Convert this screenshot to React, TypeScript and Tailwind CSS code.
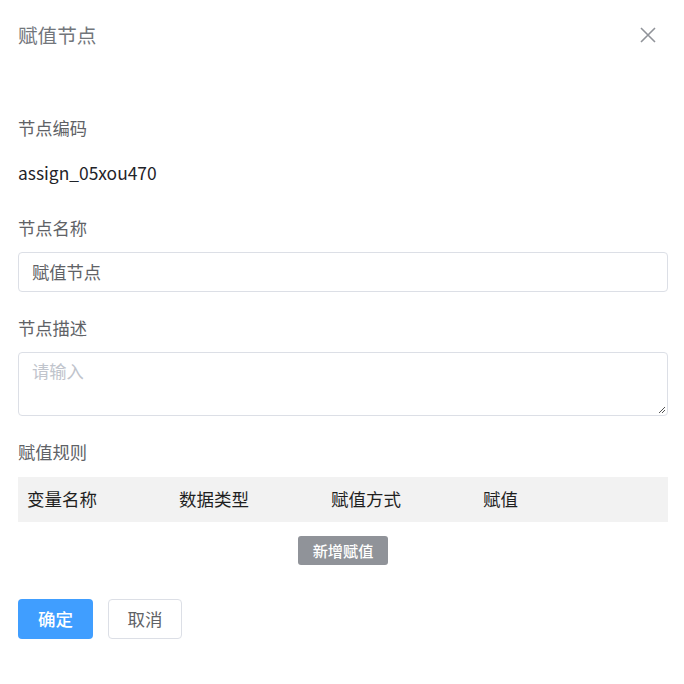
import React from "react";

const font = { fontFamily: '"Noto Sans CJK SC", "Noto Sans", sans-serif' };

function Label({ children }: { children: React.ReactNode }) {
  return <div className="text-[17.3px] leading-[24px] text-[#606266]">{children}</div>;
}

export default function App() {
  const cols = ["变量名称", "数据类型", "赋值方式", "赋值"];
  return (
    <div className="h-[684px] w-[684px] bg-white" style={font}>
      <div className="flex items-center justify-between pl-[18px] pr-[27px] pt-[20px]">
        <h1 className="text-[19.6px] leading-[30px] text-[#72767b]">赋值节点</h1>
        <svg width="18" height="18" viewBox="0 0 18 18" className="text-[#909399]">
          <path d="M2 2 L16 16 M16 2 L2 16" stroke="currentColor" strokeWidth="1.6" fill="none" />
        </svg>
      </div>

      <div className="pl-[18px] pr-[16px] pt-[66px]">
        <Label>节点编码</Label>
        <div className="mt-[21px] text-[17.4px] leading-[24px] text-[#1f2329]">assign_05xou470</div>

        <div className="mt-[31px]">
          <Label>节点名称</Label>
        </div>
        <div className="mt-[12px] flex h-[40px] items-center rounded-[4px] border border-[#dcdfe6] px-[13px] text-[17.3px] text-[#606266]">
          赋值节点
        </div>

        <div className="mt-[24px]">
          <Label>节点描述</Label>
        </div>
        <div className="relative mt-[12px] h-[64px] rounded-[4px] border border-[#dcdfe6] px-[13px] pt-[6px] text-[17.3px] leading-[24px] text-[#c0c4cc]">
          请输入
          <svg width="8" height="8" viewBox="0 0 8 8" className="absolute bottom-[1px] right-[1px] text-[#555]">
            <path d="M7 1 L1 7 M7 4 L4 7" stroke="currentColor" strokeWidth="1" fill="none" />
          </svg>
        </div>

        <div className="mt-[24px]">
          <Label>赋值规则</Label>
        </div>
        <div className="mt-[13px] grid h-[45px] grid-cols-[152px_152px_152px_1fr] items-center bg-[#f2f2f2] pl-[9px] text-[17.5px] text-[#1f1f1f]">
          {cols.map((c) => (
            <div key={c}>{c}</div>
          ))}
        </div>
        <div className="mt-[14px] flex justify-center">
          <button className="h-[29px] w-[90px] rounded-[3px] bg-[#909399] text-[15.2px] font-medium text-white">
            新增赋值
          </button>
        </div>

        <div className="mt-[34px] flex gap-[15px]">
          <button className="h-[40px] w-[75px] rounded-[4px] bg-[#409eff] text-[17.5px] font-medium text-white">
            确定
          </button>
          <button className="h-[40px] w-[74px] rounded-[4px] border border-[#dcdfe6] bg-white text-[17.5px] text-[#606266]">
            取消
          </button>
        </div>
      </div>
    </div>
  );
}
